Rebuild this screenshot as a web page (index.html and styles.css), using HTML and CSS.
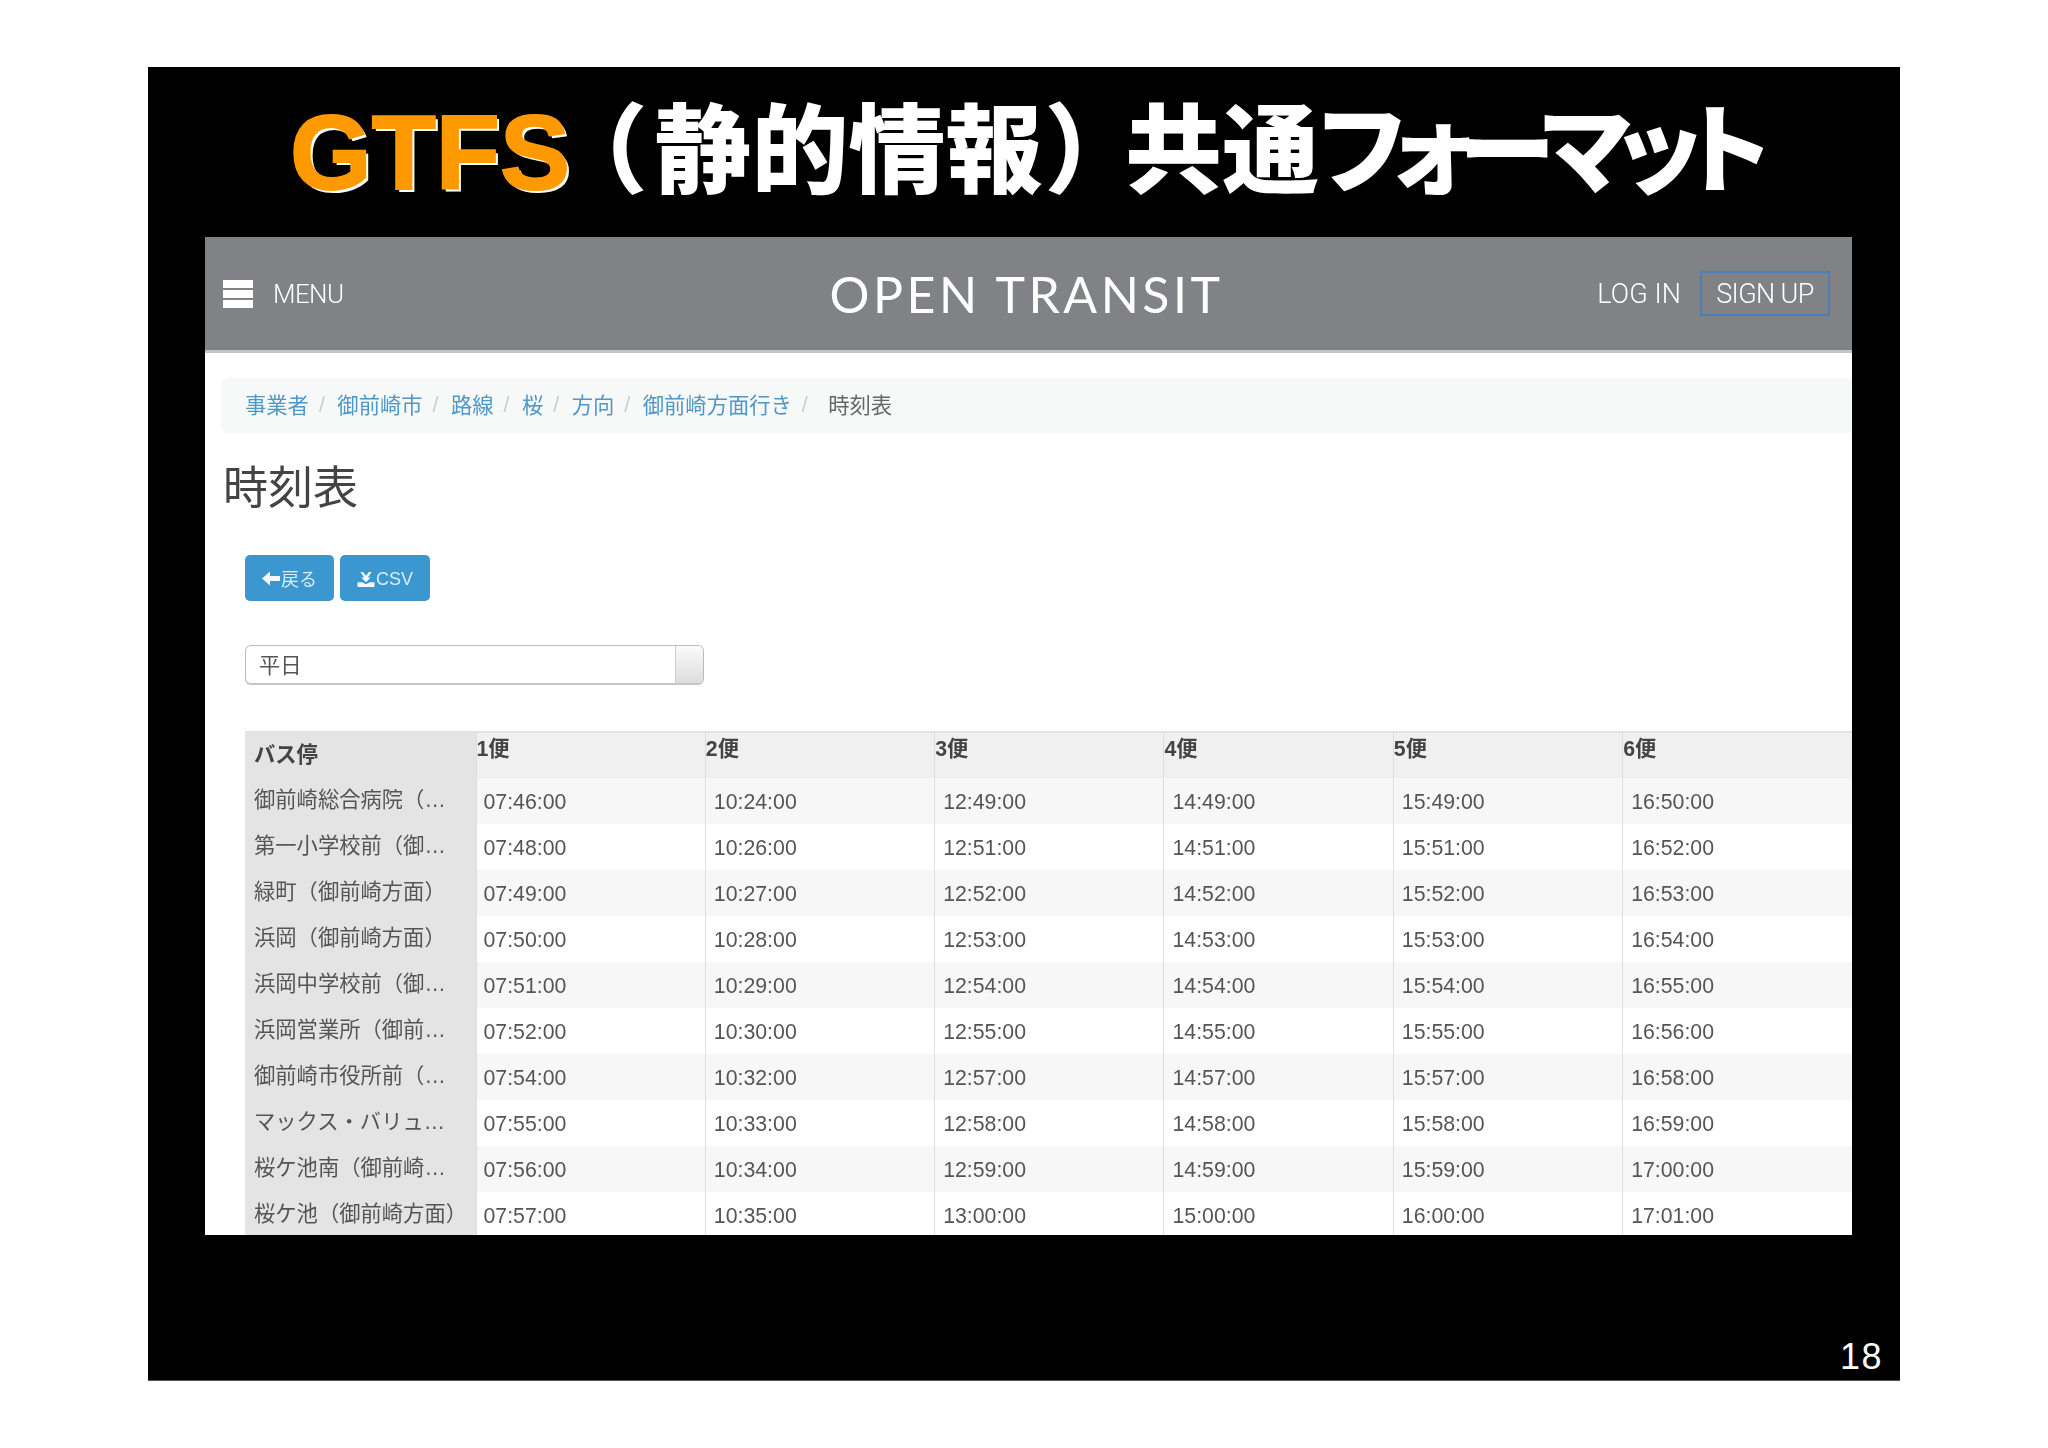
FILE: index.html
```html
<!DOCTYPE html>
<html lang="ja">
<head>
<meta charset="utf-8">
<title>GTFS 共通フォーマット</title>
<link rel="stylesheet" href="styles.css">
</head>
<body>
<main class="slide">
  <h1 class="title"><span class="gtfs">GTFS</span><span class="open">（</span><span>静的情報</span><span class="close">）</span><span>共通</span><span class="kana">フォーマット</span></h1>
  <section class="panel">
    <header class="nav">
      <div class="nav-left">
        <span class="burger"><i></i><i></i><i></i></span>
        <span class="nav-text">MENU</span>
      </div>
      <div class="brand">OPEN TRANSIT</div>
      <div class="nav-right">
        <span class="nav-text">LOG IN</span>
        <span class="nav-text signup">SIGN UP</span>
      </div>
    </header>
    <nav class="crumbs">
      <a>事業者</a><b>/</b><a>御前崎市</a><b>/</b><a>路線</a><b>/</b><a>桜</a><b>/</b><a>方向</a><b>/</b><a>御前崎方面行き</a><b>/</b><span>時刻表</span>
    </nav>
    <h2 class="heading">時刻表</h2>
    <div class="buttons">
      <span class="btn back"><svg class="ico" viewBox="0 0 18 16"><path d="M0 8 8 1v4.5h10v5H8V15z"/></svg>戻る</span>
      <span class="btn csv"><svg class="ico" viewBox="0 0 18 18"><path d="M3 1h3l3 4 3-4h3l-4 6h3l-5 5-5-5h3zM0 12h5l4 2 4-2h5v5H0z"/></svg>CSV</span>
    </div>
    <div class="select"><span class="select-value">平日</span><span class="select-arrow"></span></div>
    <table class="times">
      <thead>
        <tr><th class="stop">バス停</th><th>1便</th><th>2便</th><th>3便</th><th>4便</th><th>5便</th><th>6便</th></tr>
      </thead>
      <tbody>
        <tr><th class="stop">御前崎総合病院（…</th><td>07:46:00</td><td>10:24:00</td><td>12:49:00</td><td>14:49:00</td><td>15:49:00</td><td>16:50:00</td></tr>
        <tr><th class="stop">第一小学校前（御…</th><td>07:48:00</td><td>10:26:00</td><td>12:51:00</td><td>14:51:00</td><td>15:51:00</td><td>16:52:00</td></tr>
        <tr><th class="stop">緑町（御前崎方面）</th><td>07:49:00</td><td>10:27:00</td><td>12:52:00</td><td>14:52:00</td><td>15:52:00</td><td>16:53:00</td></tr>
        <tr><th class="stop">浜岡（御前崎方面）</th><td>07:50:00</td><td>10:28:00</td><td>12:53:00</td><td>14:53:00</td><td>15:53:00</td><td>16:54:00</td></tr>
        <tr><th class="stop">浜岡中学校前（御…</th><td>07:51:00</td><td>10:29:00</td><td>12:54:00</td><td>14:54:00</td><td>15:54:00</td><td>16:55:00</td></tr>
        <tr><th class="stop">浜岡営業所（御前…</th><td>07:52:00</td><td>10:30:00</td><td>12:55:00</td><td>14:55:00</td><td>15:55:00</td><td>16:56:00</td></tr>
        <tr><th class="stop">御前崎市役所前（…</th><td>07:54:00</td><td>10:32:00</td><td>12:57:00</td><td>14:57:00</td><td>15:57:00</td><td>16:58:00</td></tr>
        <tr><th class="stop">マックス・バリュ…</th><td>07:55:00</td><td>10:33:00</td><td>12:58:00</td><td>14:58:00</td><td>15:58:00</td><td>16:59:00</td></tr>
        <tr><th class="stop">桜ケ池南（御前崎…</th><td>07:56:00</td><td>10:34:00</td><td>12:59:00</td><td>14:59:00</td><td>15:59:00</td><td>17:00:00</td></tr>
        <tr><th class="stop">桜ケ池（御前崎方面）</th><td>07:57:00</td><td>10:35:00</td><td>13:00:00</td><td>15:00:00</td><td>16:00:00</td><td>17:01:00</td></tr>
      </tbody>
    </table>
  </section>
  <footer class="page-no">18</footer>
</main>
</body>
</html>
```
FILE: styles.css
```css
* { box-sizing: border-box; }
html, body { margin: 0; background: #fff; }
body {
  height: 1448px;
  padding: 67px 148px 0;
  font-family: "Liberation Sans", "Noto Sans CJK JP", sans-serif;
  overflow: hidden;
}
.slide {
  width: 1752px;
  height: 1314px;
  background: #000;
  display: flex;
  flex-direction: column;
  border-bottom: 1px solid #555;
}
.title {
  height: 170px;
  margin: 0;
  padding: 0 0 20px 142px;
  display: flex;
  align-items: center;
  color: #fff;
  font-family: "Noto Sans CJK JP", sans-serif;
  font-weight: 900;
  font-size: 97px;
  line-height: 1;
  white-space: nowrap;
}
.gtfs {
  margin-top: 20px;
  font-family: "Liberation Sans", sans-serif;
  font-weight: 700;
  font-size: 105px;
  color: #f90;
  -webkit-text-stroke: 2px #f90;
  text-shadow: 3px 3px 0 #fff;
}
.open { font-feature-settings: "palt"; margin-left: 25px; margin-right: 11px; }
.close { font-feature-settings: "palt"; margin-left: 6px; margin-right: 28px; }
.kana { font-feature-settings: "palt"; letter-spacing: -12.5px; }
.panel {
  width: 1647px;
  height: 998px;
  margin-left: 57px;
  background: #fff;
  overflow: hidden;
  filter: blur(0.5px);
  flex: none;
}
.nav {
  height: 116px;
  background: #808285;
  border-bottom: 3px solid #c4c5c7;
  display: grid;
  grid-template-columns: 1fr auto 1fr;
  align-items: center;
  padding: 0 22px 0 18px;
  color: #fff;
}
.nav-left { display: flex; align-items: center; gap: 20px; }
.burger { display: flex; flex-direction: column; gap: 2px; width: 30px; }
.burger i { display: block; height: 8px; background: #fff; }
.nav-text {
  font-family: Roboto, sans-serif;
  font-weight: 300;
  font-size: 26px;
  letter-spacing: -0.6px;
}
.brand {
  font-family: Lato, sans-serif;
  font-weight: 400;
  font-size: 50px;
  letter-spacing: 3.5px;
}
.nav-right { display: flex; justify-content: flex-end; align-items: center; gap: 19px; }
.nav-right .nav-text { font-size: 27px; letter-spacing: 0.1px; }
.nav-right .signup {
  width: 130px;
  height: 45px;
  border: 2px solid #4a80b8;
  display: flex;
  align-items: center;
  justify-content: center;
  letter-spacing: -0.6px;
}
.crumbs {
  margin: 25px 0 0 16px;
  height: 55px;
  background: #f7f8f8;
  border-radius: 8px 0 0 8px;
  display: flex;
  align-items: center;
  padding: 0 0 4px 24px;
  font-size: 21.3px;
  color: #666;
}
.crumbs a { color: #4f97c6; }
.crumbs b { color: #ccc; font-weight: 400; margin: 4px 12.5px 0 10px; }
.crumbs span { margin-left: 8px; }
.heading {
  margin: 28px 0 0 18px;
  font-size: 45px;
  font-weight: 400;
  line-height: 55px;
  color: #444;
}
.buttons { display: flex; gap: 6px; margin: 39px 0 0 40px; }
.btn {
  height: 46px;
  display: flex;
  align-items: center;
  justify-content: center;
  gap: 1px;
  background: #3a97cf;
  border-radius: 5px;
  color: #dcedf8;
  font-size: 18px;
}
.back { width: 89px; }
.csv { width: 90px; padding-top: 2px; }
.ico { fill: #f4f9fc; width: 18px; height: 17px; }
.select {
  margin: 44px 0 0 40px;
  width: 459px;
  height: 40px;
  border: 1px solid #bbb;
  border-bottom: 2px solid #c4c4c4;
  border-radius: 6px;
  display: flex;
  overflow: hidden;
  font-size: 21.3px;
  color: #555;
}
.select-value { flex: 1; padding-left: 13px; line-height: 40px; }
.select-arrow {
  width: 28px;
  border-left: 1px solid #ccc;
  background: linear-gradient(#fafafa, #ddd);
}
.times {
  margin: 46px 0 0 40px;
  width: 1607px;
  table-layout: fixed;
  border-collapse: collapse;
  border-top: 2px solid #e2e2e2;
  font-size: 21.3px;
  line-height: 24px;
  color: #555;
}
.times th, .times td {
  height: 46px;
  padding: 1px 0 0 8px;
  text-align: left;
  font-weight: 400;
  white-space: nowrap;
  border-left: 1px solid #dedede;
}
.times td:nth-child(2) { padding-left: 7px; }
.times th:first-child { width: 231px; }
.times tbody tr:nth-child(odd) { background: #f7f7f8; }
.times tbody tr:nth-child(even) { background: #fff; }
.times thead tr { background: #f0f0f1; }
.times thead th {
  font-weight: 700;
  color: #444;
  padding: 0 0 13px 0;
}
.times .stop {
  background: #e4e4e5;
  padding: 0 0 3px 9px;
  border-left: 0;
  color: #555;
  font-weight: 400;
}
.times thead .stop { font-weight: 700; color: #444; padding: 0 0 1px 9px; }
.page-no {
  flex: 1;
  display: flex;
  align-items: flex-end;
  justify-content: flex-end;
  padding: 0 17px 0 0;
  color: #fff;
  font-size: 36px;
  letter-spacing: 1.5px;
  line-height: 46px;
}
```
